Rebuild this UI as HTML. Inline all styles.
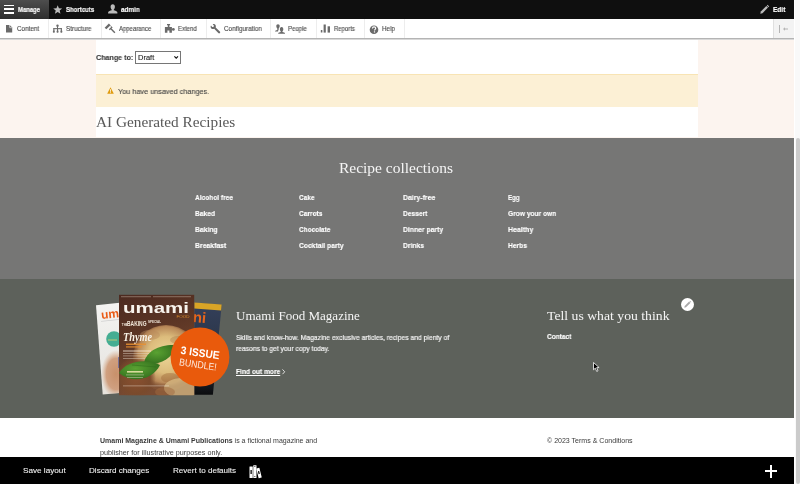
<!DOCTYPE html>
<html><head><meta charset="utf-8">
<style>
html,body{margin:0;padding:0;width:800px;height:484px;overflow:hidden;background:#fff;}
body{position:relative;font-family:"Liberation Sans", sans-serif;}
.a{position:absolute;}
.t{position:absolute;white-space:nowrap;line-height:1;transform-origin:0 50%;will-change:transform;}
.t u{text-decoration:underline;text-decoration-thickness:1px;text-underline-offset:1px;}
svg{position:absolute;overflow:visible;}
</style></head>
<body>
<!-- page background -->
<div class="a" style="left:0;top:0;width:794px;height:484px;background:#fcf4ef"></div>
<!-- white content column -->
<div class="a" style="left:96px;top:39px;width:602px;height:98px;background:#fff"></div>
<!-- message -->
<div class="a" style="left:96px;top:74px;width:602px;height:32.7px;background:#fcf0d5;border-top:0.6px solid #f8e4b4;box-sizing:border-box"></div>
<!-- select -->
<div class="a" style="left:135.3px;top:51.1px;width:45.6px;height:12.6px;box-sizing:border-box;border:0.8px solid #767676;border-radius:0;background:#fff"></div>
<svg style="left:173.8px;top:56.2px" width="4.4" height="2.8" viewBox="0 0 4.4 2.8"><path d="M0.4 0.4 L2.2 2.2 L4 0.4" fill="none" stroke="#111" stroke-width="1.15"/></svg>
<!-- warning icon -->
<svg style="left:106.9px;top:86.9px" width="7" height="7" viewBox="0 0 14 14"><path d="M7 0.5 L13.6 13.5 L0.4 13.5 Z" fill="#e09b0f"/><rect x="6.2" y="4.5" width="1.6" height="5" fill="#fff"/><rect x="6.2" y="10.6" width="1.6" height="1.6" fill="#fff"/></svg>

<!-- recipe collections band -->
<div class="a" style="left:0;top:137.5px;width:794px;height:141.5px;background:#767675"></div>
<!-- footer -->
<div class="a" style="left:0;top:279px;width:794px;height:139.2px;background:#5d615b"></div>
<!-- bottom white -->
<div class="a" style="left:0;top:418.2px;width:794px;height:39px;background:#fff"></div>

<!-- MAGAZINE -->
<svg style="left:0;top:0;will-change:transform" width="800" height="484" viewBox="0 0 800 484">
<defs>
<linearGradient id="navy" x1="0" y1="0" x2="0" y2="1"><stop offset="0" stop-color="#34405a"/><stop offset="0.6" stop-color="#283244"/><stop offset="0.85" stop-color="#1a1e26"/><stop offset="1" stop-color="#0b0c0e"/></linearGradient>
<linearGradient id="brown" x1="0" y1="0" x2="0.3" y2="1"><stop offset="0" stop-color="#4c2a20"/><stop offset="0.4" stop-color="#5a3424"/><stop offset="1" stop-color="#7a4c32"/></linearGradient>
<radialGradient id="pie" cx="0.5" cy="0.45" r="0.5"><stop offset="0" stop-color="#ecd698"/><stop offset="0.55" stop-color="#dcbc7c"/><stop offset="0.85" stop-color="#b88858"/><stop offset="1" stop-color="#8a5a38" stop-opacity="0.5"/></radialGradient>
<linearGradient id="leftc" x1="0" y1="0" x2="0" y2="1"><stop offset="0" stop-color="#f4f4f2"/><stop offset="0.5" stop-color="#ecebe8"/><stop offset="1" stop-color="#e6e2dc"/></linearGradient>
<radialGradient id="hand" cx="0.5" cy="0.5" r="0.5"><stop offset="0" stop-color="#c8906a"/><stop offset="0.65" stop-color="#d0a080"/><stop offset="1" stop-color="#d8b498" stop-opacity="0"/></radialGradient>
<radialGradient id="leaf" cx="0.4" cy="0.4" r="0.7"><stop offset="0" stop-color="#5aa232"/><stop offset="1" stop-color="#2f6a1c"/></radialGradient>
<radialGradient id="crust" cx="0.5" cy="0.5" r="0.5"><stop offset="0" stop-color="#8a5030"/><stop offset="0.7" stop-color="#7a4a2c"/><stop offset="1" stop-color="#7a4a2c" stop-opacity="0"/></radialGradient>
<clipPath id="cc"><rect x="119" y="294.8" width="75.2" height="100.4"/></clipPath>
<clipPath id="lc"><polygon points="96,305.2 122,302.4 125,392.6 102.7,394.6"/></clipPath>
</defs>
<!-- right cover -->
<polygon points="194.3,302.7 221.7,304.8 212.9,394.7 194.3,394.7" fill="url(#navy)"/>
<polygon points="194.3,302.4 221.7,304.5 221.1,310.6 194.3,308.6" fill="#d9a526"/>
<text x="193" y="323" font-family="'Liberation Sans', sans-serif" font-weight="700" font-size="15" fill="#e8651a" transform="rotate(5 205 316)">ni</text>
<!-- left cover -->
<polygon points="96,305.2 122,302.4 125,392.6 102.7,394.6" fill="url(#leftc)"/>
<g clip-path="url(#lc)">
<ellipse cx="116" cy="374" rx="15" ry="24" fill="url(#hand)"/>
<rect x="101" y="320" width="19" height="0.9" fill="#cfcfcf" transform="rotate(-6 110 320)"/>
<rect x="118.2" y="357" width="0.8" height="11" fill="#4a5aa8" opacity="0.8"/>
</g>
<text x="101" y="318" font-family="'Liberation Sans', sans-serif" font-weight="700" font-size="12" fill="#ea5c16" transform="rotate(-6 110 314)">um</text>
<circle cx="114" cy="339" r="7.8" fill="#45ad92"/>
<rect x="108" y="339.5" width="9" height="1" fill="#d8d070" opacity="0.8"/>
<!-- center cover -->
<rect x="119" y="294.8" width="75.2" height="100.4" fill="url(#brown)"/>
<g clip-path="url(#cc)">
<ellipse cx="166" cy="358" rx="33" ry="33" fill="url(#pie)"/>
<ellipse cx="150" cy="335" rx="10" ry="5" fill="#b88a5a" opacity="0.45"/>
<ellipse cx="178" cy="340" rx="8" ry="4" fill="#a87a4a" opacity="0.4"/>
<ellipse cx="186" cy="366" rx="6" ry="9" fill="#9a6a40" opacity="0.35"/>
<ellipse cx="170" cy="378" rx="9" ry="5" fill="#a06a3a" opacity="0.45"/>
<ellipse cx="182" cy="388" rx="18" ry="10" fill="#dcc08a" opacity="0.7"/>
<ellipse cx="136" cy="378" rx="20" ry="22" fill="url(#crust)"/>
<ellipse cx="165" cy="392" rx="10" ry="5" fill="#a06a40" opacity="0.5"/>
<path d="M144 363 C146 351 160 344 176 345 C174 357 160 367 144 363 Z" fill="url(#leaf)"/>
<path d="M119 373 C126 361 146 358 160 365 C153 380 132 384 119 373 Z" fill="url(#leaf)"/>
<path d="M132 365 L156 367" stroke="#2f6a1a" stroke-width="0.5"/>
</g>
<rect x="121" y="296.3" width="30" height="0.9" fill="#e0d0c0" opacity="0.45"/>
<rect x="153" y="296.3" width="38" height="0.9" fill="#e0d0c0" opacity="0.45"/>
<text x="123" y="312.8" font-family="'Liberation Sans', sans-serif" font-weight="700" font-size="14" fill="#f8f3ec" textLength="66" lengthAdjust="spacingAndGlyphs">umami</text>
<text x="176.5" y="318" font-family="'Liberation Sans', sans-serif" font-size="4.2" fill="#d98a2a" textLength="13" lengthAdjust="spacingAndGlyphs">FOOD</text>
<text x="121.8" y="326" font-family="'Liberation Sans', sans-serif" font-weight="700" font-size="3" fill="#f0e6d8">THE</text>
<text x="127" y="326.2" font-family="'Liberation Sans', sans-serif" font-weight="700" font-size="7" fill="#f0e6d8" textLength="19.5" lengthAdjust="spacingAndGlyphs">BAKING</text>
<text x="148" y="323" font-family="'Liberation Sans', sans-serif" font-weight="700" font-size="3.2" fill="#f0e6d8" textLength="13" lengthAdjust="spacingAndGlyphs">SPECIAL</text>
<text x="123" y="341" font-family="'Liberation Serif', serif" font-style="italic" font-weight="700" font-size="12" fill="#f8f2e6" textLength="29" lengthAdjust="spacingAndGlyphs">Thyme</text>
<rect x="126" y="343.5" width="20" height="1.5" fill="#e89030" opacity="0.85"/>
<rect x="126" y="346.2" width="16" height="1.4" fill="#e89030" opacity="0.75"/>
<rect x="123" y="350.5" width="28" height="1" fill="#f4eadc" opacity="0.8"/>
<rect x="123" y="353" width="26" height="0.8" fill="#e8dccc" opacity="0.55"/>
<rect x="123" y="355.5" width="24" height="0.8" fill="#e8dccc" opacity="0.55"/>
<rect x="123" y="358" width="22" height="0.8" fill="#e8dccc" opacity="0.55"/>
<rect x="127" y="371" width="16" height="1.6" fill="#f0e6b0" opacity="0.85"/>
<rect x="126" y="374.5" width="18" height="0.8" fill="#e8dccc" opacity="0.55"/>
<rect x="127" y="377" width="16" height="0.8" fill="#e8dccc" opacity="0.55"/>
<rect x="123" y="385.5" width="46" height="0.8" fill="#f4eadc" opacity="0.5"/>
<!-- orange badge -->
<circle cx="200" cy="357" r="29.4" fill="#e95a0c"/>
<g transform="rotate(8 199 357)">
<text x="199.5" y="356.5" text-anchor="middle" font-family="'Liberation Sans', sans-serif" font-weight="700" font-size="11" fill="#fff" textLength="39" lengthAdjust="spacingAndGlyphs">3 ISSUE</text>
<text x="199" y="368" text-anchor="middle" font-family="'Liberation Sans', sans-serif" font-size="10" fill="#fde8dc" textLength="38" lengthAdjust="spacingAndGlyphs">BUNDLE!</text>
</g>
</svg>


<!-- pencil circle -->
<div class="a" style="left:681.2px;top:298.1px;width:13px;height:13px;border-radius:50%;background:#fff"></div>
<svg style="left:683px;top:300px" width="9" height="9" viewBox="0 0 18 18"><path d="M2.6 15.4 L3.4 12 L12.2 3.2 L14.8 5.8 L6 14.6 Z" fill="#a8a8a8"/><path d="M13 2.4 L14 1.4 L16.6 4 L15.6 5 Z" fill="#a8a8a8"/></svg>
<!-- find out more chevron -->
<svg style="left:281.9px;top:368.8px" width="3.2" height="5.6" viewBox="0 0 3.2 5.6"><path d="M0.5 0.4 L2.7 2.8 L0.5 5.2" fill="none" stroke="#fff" stroke-width="0.8"/></svg>

<div class="t" style="left:95.91px;top:54.07px;font-family:'Liberation Sans', sans-serif;font-weight:700;font-size:7.6px;color:#383838;transform:scaleX(0.9399);-webkit-text-stroke:0.1px #383838;">Change to:</div>
<div class="t" style="left:138.10px;top:54.05px;font-family:'Liberation Sans', sans-serif;font-weight:400;font-size:7.5px;color:#222222;transform:scaleX(0.9894);-webkit-text-stroke:0.12px #222;">Draft</div>
<div class="t" style="left:118.06px;top:87.60px;font-family:'Liberation Sans', sans-serif;font-weight:400;font-size:7.8px;color:#444444;transform:scaleX(0.9339);-webkit-text-stroke:0.12px #444;">You have unsaved changes.</div>
<div class="t" style="left:95.79px;top:114.64px;font-family:'Liberation Serif', serif;font-weight:400;font-size:15px;color:#585858;transform:scaleX(1.0191);">AI Generated Recipies</div>
<div class="t" style="left:339.38px;top:161.06px;font-family:'Liberation Serif', serif;font-weight:400;font-size:14.5px;color:#f5f5f5;transform:scaleX(1.0678);">Recipe collections</div>
<div class="t" style="left:194.74px;top:193.53px;font-family:'Liberation Sans', sans-serif;font-weight:700;font-size:8px;color:#ffffff;transform:scaleX(0.8225);-webkit-text-stroke:0.15px #fff;">Alcohol free</div>
<div class="t" style="left:194.73px;top:209.53px;font-family:'Liberation Sans', sans-serif;font-weight:700;font-size:8px;color:#ffffff;transform:scaleX(0.8299);-webkit-text-stroke:0.15px #fff;">Baked</div>
<div class="t" style="left:194.73px;top:225.53px;font-family:'Liberation Sans', sans-serif;font-weight:700;font-size:8px;color:#ffffff;transform:scaleX(0.8490);-webkit-text-stroke:0.15px #fff;">Baking</div>
<div class="t" style="left:194.73px;top:241.53px;font-family:'Liberation Sans', sans-serif;font-weight:700;font-size:8px;color:#ffffff;transform:scaleX(0.8569);-webkit-text-stroke:0.15px #fff;">Breakfast</div>
<div class="t" style="left:299.34px;top:193.53px;font-family:'Liberation Sans', sans-serif;font-weight:700;font-size:8px;color:#ffffff;transform:scaleX(0.8115);-webkit-text-stroke:0.15px #fff;">Cake</div>
<div class="t" style="left:299.34px;top:209.53px;font-family:'Liberation Sans', sans-serif;font-weight:700;font-size:8px;color:#ffffff;transform:scaleX(0.8234);-webkit-text-stroke:0.15px #fff;">Carrots</div>
<div class="t" style="left:299.34px;top:225.53px;font-family:'Liberation Sans', sans-serif;font-weight:700;font-size:8px;color:#ffffff;transform:scaleX(0.8098);-webkit-text-stroke:0.15px #fff;">Chocolate</div>
<div class="t" style="left:299.33px;top:241.53px;font-family:'Liberation Sans', sans-serif;font-weight:700;font-size:8px;color:#ffffff;transform:scaleX(0.8418);-webkit-text-stroke:0.15px #fff;">Cocktail party</div>
<div class="t" style="left:403.42px;top:193.53px;font-family:'Liberation Sans', sans-serif;font-weight:700;font-size:8px;color:#ffffff;transform:scaleX(0.8633);-webkit-text-stroke:0.15px #fff;">Dairy-free</div>
<div class="t" style="left:403.43px;top:209.53px;font-family:'Liberation Sans', sans-serif;font-weight:700;font-size:8px;color:#ffffff;transform:scaleX(0.8287);-webkit-text-stroke:0.15px #fff;">Dessert</div>
<div class="t" style="left:403.43px;top:225.53px;font-family:'Liberation Sans', sans-serif;font-weight:700;font-size:8px;color:#ffffff;transform:scaleX(0.8519);-webkit-text-stroke:0.15px #fff;">Dinner party</div>
<div class="t" style="left:403.43px;top:241.53px;font-family:'Liberation Sans', sans-serif;font-weight:700;font-size:8px;color:#ffffff;transform:scaleX(0.8448);-webkit-text-stroke:0.15px #fff;">Drinks</div>
<div class="t" style="left:507.75px;top:193.53px;font-family:'Liberation Sans', sans-serif;font-weight:700;font-size:8px;color:#ffffff;transform:scaleX(0.7671);-webkit-text-stroke:0.15px #fff;">Egg</div>
<div class="t" style="left:507.73px;top:209.53px;font-family:'Liberation Sans', sans-serif;font-weight:700;font-size:8px;color:#ffffff;transform:scaleX(0.8299);-webkit-text-stroke:0.15px #fff;">Grow your own</div>
<div class="t" style="left:507.72px;top:225.53px;font-family:'Liberation Sans', sans-serif;font-weight:700;font-size:8px;color:#ffffff;transform:scaleX(0.8738);-webkit-text-stroke:0.15px #fff;">Healthy</div>
<div class="t" style="left:507.73px;top:241.53px;font-family:'Liberation Sans', sans-serif;font-weight:700;font-size:8px;color:#ffffff;transform:scaleX(0.8391);-webkit-text-stroke:0.15px #fff;">Herbs</div>
<div class="t" style="left:235.98px;top:310.05px;font-family:'Liberation Serif', serif;font-weight:400;font-size:12.6px;color:#f5f5f5;transform:scaleX(1.0357);">Umami Food Magazine</div>
<div class="t" style="left:236.03px;top:333.57px;font-family:'Liberation Sans', sans-serif;font-weight:400;font-size:7.6px;color:#f4f4f4;transform:scaleX(0.8910);-webkit-text-stroke:0.2px #f4f4f4;">Skills and know-how. Magazine exclusive articles, recipes and plenty of</div>
<div class="t" style="left:236.03px;top:345.17px;font-family:'Liberation Sans', sans-serif;font-weight:400;font-size:7.6px;color:#f4f4f4;transform:scaleX(0.8866);-webkit-text-stroke:0.2px #f4f4f4;">reasons to get your copy today.</div>
<div class="t" style="left:236.03px;top:367.75px;font-family:'Liberation Sans', sans-serif;font-weight:700;font-size:7.5px;color:#ffffff;transform:scaleX(0.8846);-webkit-text-stroke:0.15px #fff;"><u>Find out more</u></div>
<div class="t" style="left:547.05px;top:310.45px;font-family:'Liberation Serif', serif;font-weight:400;font-size:12.6px;color:#f5f5f5;transform:scaleX(1.0893);">Tell us what you think</div>
<div class="t" style="left:547.34px;top:333.05px;font-family:'Liberation Sans', sans-serif;font-weight:700;font-size:7.5px;color:#ffffff;transform:scaleX(0.8711);-webkit-text-stroke:0.15px #fff;">Contact</div>
<div class="t" style="left:99.72px;top:437.07px;font-family:'Liberation Sans', sans-serif;font-weight:400;font-size:7px;color:#3a3a3a;"><b>Umami Magazine &amp; Umami Publications</b> is a fictional magazine and</div>
<div class="t" style="left:99.71px;top:449.07px;font-family:'Liberation Sans', sans-serif;font-weight:400;font-size:7px;color:#3a3a3a;transform:scaleX(1.0306);">publisher for illustrative purposes only.</div>
<div class="t" style="left:546.62px;top:437.17px;font-family:'Liberation Sans', sans-serif;font-weight:400;font-size:7px;color:#3a3a3a;transform:scaleX(1.0044);">© 2023 Terms &amp; Conditions</div>
<!-- cursor -->
<svg style="left:592.6px;top:361.6px" width="8" height="10.5" viewBox="0 0 16 21"><path d="M1 1 L1 15.5 L4.6 12.3 L7.4 18.8 L10 17.6 L7.3 11.3 L12.2 11.1 Z" fill="#000" stroke="#fff" stroke-width="1.6" stroke-linejoin="round"/></svg>
<!-- bottom bar -->
<div class="a" style="left:0;top:457px;width:794px;height:27px;background:#000"></div>
<svg style="left:248.5px;top:464.5px" width="13.5" height="13.5" viewBox="0 0 27 27"><rect x="1" y="3" width="6.5" height="23" rx="0.6" fill="#fff"/><rect x="3" y="10" width="2.5" height="8" fill="#000"/><rect x="8.5" y="0.5" width="6.5" height="25.5" rx="0.6" fill="#fff"/><circle cx="11.75" cy="3.2" r="1" fill="#000"/><circle cx="11.75" cy="23" r="1" fill="#000"/><g transform="rotate(-14 20 15)"><rect x="16.5" y="6" width="6.5" height="20" rx="0.6" fill="#fff"/><rect x="18.5" y="12" width="2.5" height="6" fill="#000"/></g></svg>
<div class="a" style="left:764.9px;top:469.9px;width:12.6px;height:2.6px;background:#fff"></div>
<div class="a" style="left:769.9px;top:465px;width:2.6px;height:12.6px;background:#fff"></div>

<!-- TOOLBAR top bar -->
<div class="a" style="left:0;top:0;width:794px;height:18.6px;background:#0f0f0f"></div>
<div class="a" style="left:0;top:0;width:49px;height:18.6px;background:linear-gradient(#4d4d4d 0%,#474747 20%,#2e2e2e 100%)"></div>
<!-- hamburger -->
<div class="a" style="left:3.8px;top:4.6px;width:10.1px;height:1.5px;background:#fff"></div>
<div class="a" style="left:3.8px;top:8.3px;width:10.1px;height:1.5px;background:#fff"></div>
<div class="a" style="left:3.8px;top:12px;width:10.1px;height:1.5px;background:#fff"></div>
<!-- star -->
<svg style="left:52.8px;top:4.6px" width="9.4" height="9.4" viewBox="0 0 20 20"><path d="M10 0.5 L12.6 7 L19.5 7.4 L14.2 11.8 L15.9 18.8 L10 15 L4.1 18.8 L5.8 11.8 L0.5 7.4 L7.4 7 Z" fill="#bbbbbb"/></svg>
<!-- person -->
<svg style="left:107.5px;top:4.4px" width="9.5" height="9.6" viewBox="0 0 19 19.2"><path d="M9.5 0.5 C12.3 0.5 13.8 2.6 13.8 5.5 C13.8 8.3 12.6 10.4 11.4 11.4 L11.6 12.6 C14.5 13.3 17.8 14.3 18.6 16.2 L18.8 19 L0.2 19 L0.4 16.2 C1.2 14.3 4.5 13.3 7.4 12.6 L7.6 11.4 C6.4 10.4 5.2 8.3 5.2 5.5 C5.2 2.6 6.7 0.5 9.5 0.5 Z" fill="#bbbbbb"/></svg>
<!-- edit pencil -->
<svg style="left:760px;top:5px" width="9.4" height="9" viewBox="0 0 19 18"><path d="M0.5 17.5 L1.6 13 L12.8 1.8 L16.2 5.2 L5 16.4 Z" fill="#bbbbbb"/><path d="M13.8 0.8 L15.2 -0.4 L18.6 3 L17.2 4.2 Z" fill="#bbbbbb"/></svg>

<!-- TRAY -->
<div class="a" style="left:0;top:18.6px;width:794px;height:19.4px;background:#fff;box-shadow:0 0.6px 1px rgba(0,0,0,0.25)"></div>
<div class="a" style="left:0;top:38px;width:794px;height:1px;background:#b4b4b4"></div>
<div class="a" style="left:0;top:39px;width:794px;height:0.9px;background:#d8d8d8"></div>
<!-- separators -->
<div class="a" style="left:48.1px;top:18.6px;width:0.5px;height:19.3px;background:#ededed"></div>
<div class="a" style="left:100.7px;top:18.6px;width:0.5px;height:19.3px;background:#ededed"></div>
<div class="a" style="left:160.4px;top:18.6px;width:0.5px;height:19.3px;background:#ededed"></div>
<div class="a" style="left:205.5px;top:18.6px;width:0.5px;height:19.3px;background:#ededed"></div>
<div class="a" style="left:270.4px;top:18.6px;width:0.5px;height:19.3px;background:#ededed"></div>
<div class="a" style="left:316px;top:18.6px;width:0.5px;height:19.3px;background:#ededed"></div>
<div class="a" style="left:364.2px;top:18.6px;width:0.5px;height:19.3px;background:#ededed"></div>
<div class="a" style="left:404.1px;top:18.6px;width:0.5px;height:19.3px;background:#ededed"></div>
<!-- tray toggle -->
<div class="a" style="left:773.3px;top:18.6px;width:20.7px;height:19.3px;background:#f3f3f3;border-left:0.5px solid #e0e0e0;box-sizing:border-box"></div>
<div class="a" style="left:779.2px;top:25px;width:1.3px;height:7.5px;background:#b4b4b4"></div>
<svg style="left:783px;top:26.8px" width="5" height="4" viewBox="0 0 10 8"><path d="M0 4 L4 0.5 L4 2.8 L10 2.8 L10 5.2 L4 5.2 L4 7.5 Z" fill="#b4b4b4"/></svg>
<!-- tray icons -->
<svg style="left:0;top:0" width="800" height="40" viewBox="0 0 800 40">
<g fill="#6a6a6a">
<!-- content: document -->
<path d="M6 25 L9.7 25 L12.2 27.6 L12.2 32.6 L6 32.6 Z"/>
<path d="M9.5 24.8 L9.7 27.6 L12.4 27.8" fill="none" stroke="#fff" stroke-width="0.6"/>
<!-- structure: sitemap -->
<circle cx="57.5" cy="25.8" r="1.2"/>
<rect x="57" y="26.5" width="1" height="2.5"/>
<rect x="53.4" y="28.1" width="8.4" height="1.1"/>
<rect x="53.3" y="28.1" width="1.1" height="3"/>
<rect x="57" y="28.1" width="1.1" height="3"/>
<rect x="60.8" y="28.1" width="1.1" height="3"/>
<rect x="52.9" y="30.6" width="1.9" height="2.1" rx="0.6"/>
<rect x="56.6" y="30.6" width="1.9" height="2.1" rx="0.6"/>
<rect x="60.4" y="30.6" width="1.9" height="2.1" rx="0.6"/>
<!-- appearance: brush -->
<g transform="translate(107.6 26.4) rotate(-45)">
<rect x="-3" y="-1.2" width="6" height="2.4"/>
<rect x="2.1" y="1" width="0.7" height="2.4" opacity="0.7"/>
<rect x="-1.2" y="3" width="4" height="1.3"/>
<rect x="0" y="4" width="1.4" height="5.6"/>
</g>
<!-- extend: puzzle -->
<path d="M167 24.1 L170.1 24.1 L170.1 25.2 L169.4 25.2 L169.4 26.9 L171.9 26.9 L171.9 32.8 L169.4 32.8 L169.4 30.6 L167.4 30.6 L167.4 32.8 L164.9 32.8 L164.9 26.9 L167.8 26.9 L167.8 25.2 L167 25.2 Z"/>
<rect x="171.5" y="28.7" width="1.4" height="1.4"/>
<circle cx="173.4" cy="29.4" r="1.35"/>
<!-- configuration: wrench -->
<path d="M211 25.6 C210.3 26.7 210.6 28 211.6 28.7 C212.4 29.2 213.4 29.2 214.2 28.8 L218.3 33 C218.8 33.5 219.5 33.5 219.9 33 C220.3 32.6 220.3 31.9 219.8 31.5 L215.7 27.4 C216.1 26.4 215.8 25.3 215 24.6 C214.3 24.1 213.4 24 212.7 24.2 L213.9 25.5 L213.5 26.9 L212.2 27.1 Z"/>
<!-- people -->
<path d="M278 24.3 C279.1 24.3 279.7 25 279.7 26 C279.7 27.1 279.1 27.9 278.7 28.4 L278.6 30.3 C278.2 30.3 278 30.8 278.1 31.5 L275 31.5 C275 30.8 276 30.3 277.3 30.1 L277.3 28.4 C276.8 27.9 276.3 27 276.3 26 C276.3 25 276.9 24.3 278 24.3 Z"/>
<path d="M281.6 27 C282.9 27 283.3 28 283.3 29.3 C283.3 30.3 282.9 31.1 282.4 31.5 L282.5 32 C283.6 32.2 284.8 32.6 285 33.2 L285 33.8 L278.2 33.8 L278.2 33.2 C278.4 32.6 279.6 32.2 280.7 32 L280.8 31.5 C280.3 31.1 279.9 30.3 279.9 29.3 C279.9 28 280.3 27 281.6 27 Z"/>
<!-- reports -->
<rect x="320.8" y="30" width="1.6" height="2.6" rx="0.3"/>
<rect x="323.6" y="24.5" width="2.2" height="8.1"/>
<rect x="327.6" y="26.3" width="2.4" height="6.3"/>
<!-- help -->
<circle cx="374" cy="29.7" r="4.3"/>
</g>
<path d="M372.4 28.4 C372.4 27.4 373.1 26.9 374.05 26.9 C375 26.9 375.7 27.5 375.7 28.3 C375.7 29.3 374.5 29.4 374.5 30.5" fill="none" stroke="#fff" stroke-width="1.1"/>
<rect x="373.9" y="31.3" width="1.2" height="1.2" fill="#fff"/>
</svg>


<!-- scrollbar -->
<div class="a" style="left:794px;top:0;width:6px;height:484px;background:#fff"></div>
<div class="a" style="left:795.4px;top:0;width:4.6px;height:484px;background:#f9f9f9"></div>
<div class="a" style="left:795.5px;top:138px;width:4px;height:345.5px;background:#cbcbcb;border-radius:2px"></div>

<div class="t" style="left:17.56px;top:6.80px;font-family:'Liberation Sans', sans-serif;font-weight:700;font-size:6.5px;color:#ffffff;transform:scaleX(0.9120);-webkit-text-stroke:0.15px #fff;">Manage</div>
<div class="t" style="left:66.16px;top:6.90px;font-family:'Liberation Sans', sans-serif;font-weight:700;font-size:6.5px;color:#ffffff;transform:scaleX(0.9288);-webkit-text-stroke:0.15px #fff;">Shortcuts</div>
<div class="t" style="left:120.65px;top:6.90px;font-family:'Liberation Sans', sans-serif;font-weight:700;font-size:6.5px;color:#ffffff;transform:scaleX(0.9766);-webkit-text-stroke:0.15px #fff;">admin</div>
<div class="t" style="left:773.04px;top:6.50px;font-family:'Liberation Sans', sans-serif;font-weight:700;font-size:6.5px;color:#ffffff;transform:scaleX(1.0033);-webkit-text-stroke:0.15px #fff;">Edit</div>
<div class="t" style="left:17.35px;top:26.38px;font-family:'Liberation Sans', sans-serif;font-weight:400;font-size:6.4px;color:#4a4a4a;transform:scaleX(0.9873);-webkit-text-stroke:0.12px #4a4a4a;">Content</div>
<div class="t" style="left:65.75px;top:26.38px;font-family:'Liberation Sans', sans-serif;font-weight:400;font-size:6.4px;color:#4a4a4a;transform:scaleX(0.9833);-webkit-text-stroke:0.12px #4a4a4a;">Structure</div>
<div class="t" style="left:118.76px;top:26.38px;font-family:'Liberation Sans', sans-serif;font-weight:400;font-size:6.4px;color:#4a4a4a;transform:scaleX(0.9335);-webkit-text-stroke:0.12px #4a4a4a;">Appearance</div>
<div class="t" style="left:178.26px;top:26.38px;font-family:'Liberation Sans', sans-serif;font-weight:400;font-size:6.4px;color:#4a4a4a;transform:scaleX(0.9436);-webkit-text-stroke:0.12px #4a4a4a;">Extend</div>
<div class="t" style="left:223.75px;top:26.38px;font-family:'Liberation Sans', sans-serif;font-weight:400;font-size:6.4px;color:#4a4a4a;transform:scaleX(0.9919);-webkit-text-stroke:0.12px #4a4a4a;">Configuration</div>
<div class="t" style="left:288.26px;top:26.38px;font-family:'Liberation Sans', sans-serif;font-weight:400;font-size:6.4px;color:#4a4a4a;transform:scaleX(0.9539);-webkit-text-stroke:0.12px #4a4a4a;">People</div>
<div class="t" style="left:334.46px;top:26.38px;font-family:'Liberation Sans', sans-serif;font-weight:400;font-size:6.4px;color:#4a4a4a;transform:scaleX(0.9278);-webkit-text-stroke:0.12px #4a4a4a;">Reports</div>
<div class="t" style="left:382.45px;top:26.38px;font-family:'Liberation Sans', sans-serif;font-weight:400;font-size:6.4px;color:#4a4a4a;transform:scaleX(0.9886);-webkit-text-stroke:0.12px #4a4a4a;">Help</div>
<div class="t" style="left:23.27px;top:466.83px;font-family:'Liberation Sans', sans-serif;font-weight:400;font-size:8px;color:#eeeeee;transform:scaleX(1.0201);-webkit-text-stroke:0.1px #eee;">Save layout</div>
<div class="t" style="left:89.18px;top:466.83px;font-family:'Liberation Sans', sans-serif;font-weight:400;font-size:8px;color:#eeeeee;transform:scaleX(1.0135);-webkit-text-stroke:0.1px #eee;">Discard changes</div>
<div class="t" style="left:173.43px;top:466.83px;font-family:'Liberation Sans', sans-serif;font-weight:400;font-size:8px;color:#eeeeee;transform:scaleX(1.0070);-webkit-text-stroke:0.1px #eee;">Revert to defaults</div>
</body></html>
